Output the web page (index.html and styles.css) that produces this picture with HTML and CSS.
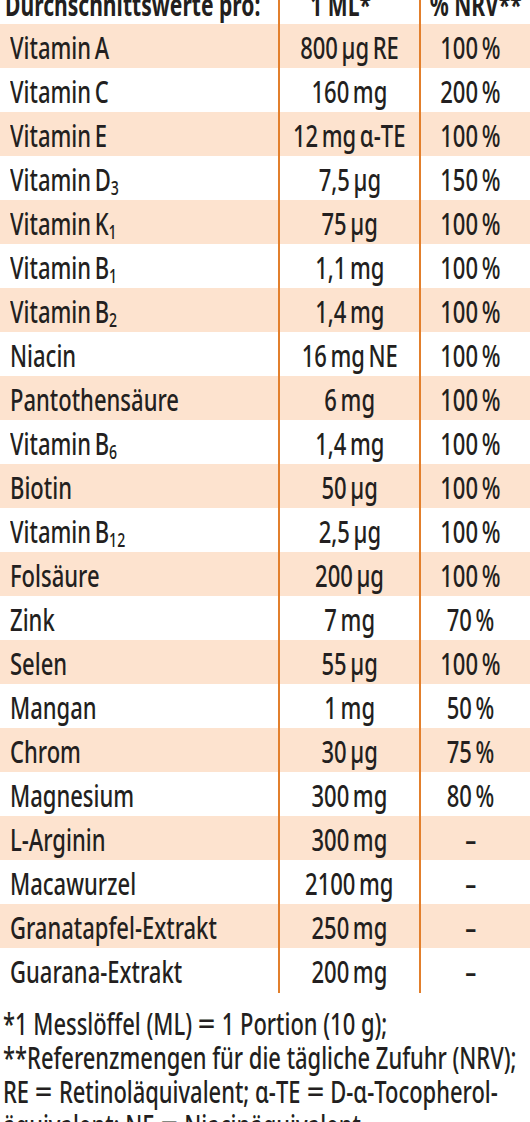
FILE: index.html
```html
<!DOCTYPE html>
<html lang="de">
<head>
<meta charset="utf-8">
<title>Nährwerte</title>
<link rel="stylesheet" href="styles.css">
</head>
<body>
<div class="sheet">
  <div class="table">
    <div class="row head">
      <div class="c name"><span class="t">Durchschnittswerte pro:</span></div>
      <div class="c amt"><span class="t">1 ML*</span></div>
      <div class="c nrv"><span class="t">% NRV**</span></div>
    </div>
    <div class="row alt"><div class="c name"><span class="t">Vitamin A</span></div><div class="c amt"><span class="t">800 µg RE</span></div><div class="c nrv"><span class="t">100 %</span></div></div>
    <div class="row"><div class="c name"><span class="t">Vitamin C</span></div><div class="c amt"><span class="t">160 mg</span></div><div class="c nrv"><span class="t">200 %</span></div></div>
    <div class="row alt"><div class="c name"><span class="t">Vitamin E</span></div><div class="c amt"><span class="t">12 mg α-TE</span></div><div class="c nrv"><span class="t">100 %</span></div></div>
    <div class="row"><div class="c name"><span class="t">Vitamin D<sub>3</sub></span></div><div class="c amt"><span class="t">7,5 µg</span></div><div class="c nrv"><span class="t">150 %</span></div></div>
    <div class="row alt"><div class="c name"><span class="t">Vitamin K<sub>1</sub></span></div><div class="c amt"><span class="t">75 µg</span></div><div class="c nrv"><span class="t">100 %</span></div></div>
    <div class="row"><div class="c name"><span class="t">Vitamin B<sub>1</sub></span></div><div class="c amt"><span class="t">1,1 mg</span></div><div class="c nrv"><span class="t">100 %</span></div></div>
    <div class="row alt"><div class="c name"><span class="t">Vitamin B<sub>2</sub></span></div><div class="c amt"><span class="t">1,4 mg</span></div><div class="c nrv"><span class="t">100 %</span></div></div>
    <div class="row"><div class="c name"><span class="t">Niacin</span></div><div class="c amt"><span class="t">16 mg NE</span></div><div class="c nrv"><span class="t">100 %</span></div></div>
    <div class="row alt"><div class="c name"><span class="t">Pantothensäure</span></div><div class="c amt"><span class="t">6 mg</span></div><div class="c nrv"><span class="t">100 %</span></div></div>
    <div class="row"><div class="c name"><span class="t">Vitamin B<sub>6</sub></span></div><div class="c amt"><span class="t">1,4 mg</span></div><div class="c nrv"><span class="t">100 %</span></div></div>
    <div class="row alt"><div class="c name"><span class="t">Biotin</span></div><div class="c amt"><span class="t">50 µg</span></div><div class="c nrv"><span class="t">100 %</span></div></div>
    <div class="row"><div class="c name"><span class="t">Vitamin B<sub>12</sub></span></div><div class="c amt"><span class="t">2,5 µg</span></div><div class="c nrv"><span class="t">100 %</span></div></div>
    <div class="row alt"><div class="c name"><span class="t">Folsäure</span></div><div class="c amt"><span class="t">200 µg</span></div><div class="c nrv"><span class="t">100 %</span></div></div>
    <div class="row"><div class="c name"><span class="t">Zink</span></div><div class="c amt"><span class="t">7 mg</span></div><div class="c nrv"><span class="t">70 %</span></div></div>
    <div class="row alt"><div class="c name"><span class="t">Selen</span></div><div class="c amt"><span class="t">55 µg</span></div><div class="c nrv"><span class="t">100 %</span></div></div>
    <div class="row"><div class="c name"><span class="t">Mangan</span></div><div class="c amt"><span class="t">1 mg</span></div><div class="c nrv"><span class="t">50 %</span></div></div>
    <div class="row alt"><div class="c name"><span class="t">Chrom</span></div><div class="c amt"><span class="t">30 µg</span></div><div class="c nrv"><span class="t">75 %</span></div></div>
    <div class="row"><div class="c name"><span class="t">Magnesium</span></div><div class="c amt"><span class="t">300 mg</span></div><div class="c nrv"><span class="t">80 %</span></div></div>
    <div class="row alt"><div class="c name"><span class="t">L-Arginin</span></div><div class="c amt"><span class="t">300 mg</span></div><div class="c nrv"><span class="t">–</span></div></div>
    <div class="row"><div class="c name"><span class="t">Macawurzel</span></div><div class="c amt"><span class="t">2100 mg</span></div><div class="c nrv"><span class="t">–</span></div></div>
    <div class="row alt"><div class="c name"><span class="t">Granatapfel-Extrakt</span></div><div class="c amt"><span class="t">250 mg</span></div><div class="c nrv"><span class="t">–</span></div></div>
    <div class="row"><div class="c name"><span class="t">Guarana-Extrakt</span></div><div class="c amt"><span class="t">200 mg</span></div><div class="c nrv"><span class="t">–</span></div></div>
  </div>
  <div class="notes">
    <span class="line">*1 Messlöffel (ML) <span class="eq">=</span> 1 Portion (10 g);</span>
    <span class="line">**Referenzmengen für die tägliche Zufuhr (NRV);</span>
    <span class="line">RE <span class="eq">=</span> Retinoläquivalent; α-TE <span class="eq">=</span> D-α-Tocopherol-</span>
    <span class="line">äquivalent; NE <span class="eq">=</span> Niacinäquivalent</span>
  </div>
</div>
</body>
</html>
```
FILE: styles.css
```css
html, body {
  margin: 0;
  padding: 0;
  background: #ffffff;
}
body {
  width: 530px;
  height: 1122px;
  overflow: hidden;
  color: #231f20;
  font-family: "Noto Sans", "Open Sans", sans-serif;
  font-weight: 500;
}
.sheet {
  display: flex;
  flex-direction: column;
}
.table {
  display: flex;
  flex-direction: column;
}
.row {
  display: grid;
  grid-template-columns: 278px 141px 1fr;
  height: 44px;
  font-size: 31px;
  line-height: 44px;
}
.row.alt {
  background: #fde3cf;
}
.c {
  display: flex;
  justify-content: center;
  padding-top: 1px;
  white-space: nowrap;
  min-width: 0;
}
.t {
  display: inline-block;
  transform: scaleX(0.71);
  transform-origin: center top;
  word-spacing: -3px;
}
.name {
  justify-content: flex-start;
  padding-left: 10px;
}
.name .t {
  transform-origin: left top;
}
.amt {
  border-left: 2px solid #e27f2c;
}
.nrv {
  border-left: 2px solid #e27f2c;
  padding-right: 10px;
}
.head {
  height: 24px;
  overflow: hidden;
  font-weight: bold;
}
.head .c {
  padding-top: 0;
  overflow: hidden;
  align-items: flex-start;
}
.head .t {
  margin-top: -8px;
  line-height: 24px;
  word-spacing: 0;
  transform: scaleX(0.68);
}
.head .name {
  padding-left: 5px;
}
.head .amt {
  padding-right: 18px;
}
.head .nrv {
  padding-right: 0;
}
sub {
  font-size: 0.64em;
  vertical-align: -0.22em;
  line-height: 0;
}
.notes {
  display: flex;
  flex-direction: column;
  align-items: flex-start;
  margin-top: 15px;
  padding-left: 3px;
  font-size: 30px;
  line-height: 34px;
}
.line {
  display: block;
  white-space: nowrap;
  transform: scaleX(0.731);
  transform-origin: left top;
}
.eq {
  display: inline-block;
  margin: 0 4px;
  transform: scaleX(1.4);
}
```
